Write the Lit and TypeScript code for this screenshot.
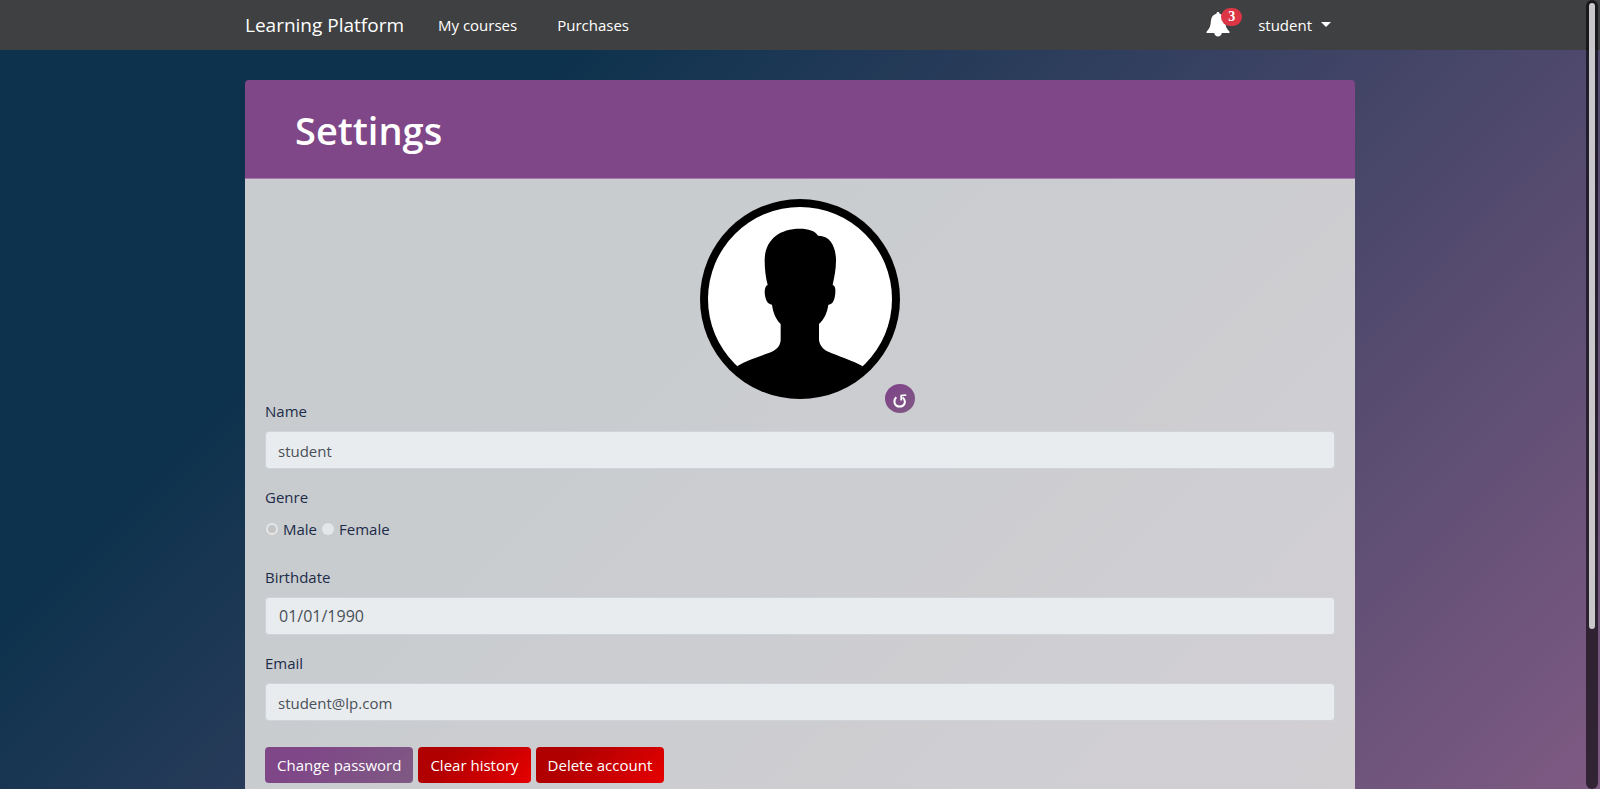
import { LitElement, html, css } from "lit";
import { customElement, property, state } from "lit/decorators.js";

@customElement("site-nav")
export class SiteNav extends LitElement {
  @property() user = "";
  @property({ type: Number }) notifications = 0;

  static styles = css`
    :host {
      display: block;
      background: #3f4041;
      color: #fff;
    }
    .inner {
      box-sizing: border-box;
      max-width: 1140px;
      height: 50px;
      margin: 0 auto;
      padding: 0 15px;
      display: flex;
      align-items: center;
      justify-content: space-between;
    }
    .group {
      display: flex;
      align-items: center;
    }
    a {
      color: inherit;
      text-decoration: none;
    }
    .brand {
      font-size: 19px;
      line-height: 30px;
      margin-right: 34px;
    }
    .links {
      display: flex;
      gap: 40px;
    }
    .account {
      gap: 16px;
      padding-right: 24px;
    }
    .bell {
      position: relative;
      width: 36px;
      height: 34px;
      padding: 0;
      border: 0;
      background: none;
      color: inherit;
    }
    .bell svg {
      position: absolute;
      left: 0;
      top: 4px;
    }
    .badge {
      position: absolute;
      left: 15px;
      top: 0;
      width: 21px;
      border-radius: 9px;
      background: #dc3545;
      font: bold 14px/18px "Liberation Serif", serif;
      text-align: center;
    }
    .user {
      display: flex;
      align-items: center;
      gap: 9px;
      padding: 0;
      border: 0;
      background: none;
      color: inherit;
      font: inherit;
    }
    .caret {
      border: 5px solid transparent;
      border-top-color: #fff;
      border-bottom: 0;
      margin-bottom: 2px;
    }
  `;

  render() {
    return html`
      <nav class="inner" aria-label="Main">
        <div class="group">
          <a class="brand" href="#">Learning Platform</a>
          <div class="links">
            <a href="#courses">My courses</a>
            <a href="#purchases">Purchases</a>
          </div>
        </div>
        <div class="group account">
          <button class="bell" type="button" aria-label="Notifications">
            <svg width="24" height="25" viewBox="0 0 24 25" fill="#fff" aria-hidden="true">
              <path d="M12 0c1 0 1.500 .7 1.600 1.700 3.500 .8 5.300 3.400 5.500 7.300 .2 4.800 1.500 8 4.400 10.700v1.300H15.800c-.3 2.200-1.900 3.500-3.800 3.500s-3.500-1.300-3.800-3.500H.5v-1.300c2.900-2.700 4.200-5.900 4.400-10.700C5.100 5.100 6.900 2.500 10.400 1.700 10.500 .7 11 0 12 0z"/>
            </svg>
            <span class="badge">${this.notifications}</span>
          </button>
          <button class="user" type="button" aria-haspopup="menu">
            ${this.user}<span class="caret"></span>
          </button>
        </div>
      </nav>
    `;
  }
}

@customElement("user-avatar")
export class UserAvatar extends LitElement {
  static styles = css`
    :host {
      display: block;
      position: relative;
      width: 200px;
      height: 200px;
    }
    .picture {
      display: block;
      width: 100%;
      height: 100%;
    }
    .reset {
      position: absolute;
      right: -15px;
      bottom: -14px;
      width: 30px;
      height: 29px;
      display: grid;
      place-items: center;
      padding: 4px 0 0;
      border: 0;
      border-radius: 50%;
      background: linear-gradient(135deg, #7f4788 26%, #7f5a83);
    }
  `;

  render() {
    return html`
      <svg class="picture" viewBox="0 0 600 600" role="img" aria-label="Profile picture">
        <circle cx="300" cy="300" r="300" />
        <circle cx="300" cy="300" r="276" fill="#fff" />
        <path
          d="M300 89C325 89 345 95 354 110C390 109 408 142 408 185C408 210 403 235 398 257C405 260 407 270 406 280C405 300 399 318 385 317C382 340 372 362 357 375V423C359 440 370 450 380 456C415 472 460 485 488 502C440 560 370 590 300 590C230 590 160 560 111 502C145 480 190 470 220 456C232 449 241 440 242 423V375C228 362 219 340 216 317C202 317 195 300 194 280C194 268 197 260 203 258C197 235 194 210 194 185C194 125 235 89 300 89Z" />
      </svg>
      <button class="reset" type="button" aria-label="Reset picture">
        <svg width="14" height="15" viewBox="0 0 14 15" fill="none" stroke="#fff" aria-hidden="true">
          <path stroke-width="2" d="M3.300 4.300C0 7.500 1.200 13.500 6.600 13.600 12.200 13.500 13.500 7.500 9.500 4.500" />
          <path stroke-width="1.700" d="M8.200 7.500V2.600L13.300 2" />
        </svg>
      </button>
    `;
  }
}

@customElement("app-root")
export class AppRoot extends LitElement {
  @state() private profile = {
    name: "student",
    birthdate: "01/01/1990",
    email: "student@lp.com",
  };

  static styles = css`
    :host {
      display: block;
      position: relative;
      height: 100vh;
      overflow: hidden;
      background: linear-gradient(315deg, #7f5a83 0%, #0d324d 74%);
      font: 15px/24px "Open Sans", "Noto Sans", sans-serif;
    }
    .scroller {
      height: 100%;
      overflow-y: auto;
      scrollbar-width: none;
    }
    .container {
      box-sizing: border-box;
      max-width: 1140px;
      margin: 0 auto;
      padding: 30px 15px;
    }
    .card-header {
      padding: 26px 50px 24px;
      border-bottom: 1px solid #a87bb0;
      border-radius: 4px 4px 0 0;
      background: #7f4788;
      color: #fff;
    }
    h1 {
      margin: 0;
      font-size: 38px;
      line-height: 48px;
      font-weight: 600;
    }
    .card-body {
      display: flex;
      flex-direction: column;
      gap: 16px;
      padding: 20px 20px 200px;
      background: linear-gradient(135deg, #c8cccf 20%, #cccdd0 50%, #d2cfd3 90%);
      color: #1c2b48;
    }
    .top {
      display: flex;
      flex-direction: column;
    }
    user-avatar {
      align-self: center;
    }
    .field,
    fieldset {
      display: flex;
      flex-direction: column;
      gap: 8px;
      min-width: 0;
      margin: 0;
      padding: 0;
      border: 0;
    }
    fieldset {
      display: block;
      padding-bottom: 8px;
    }
    legend {
      padding: 0;
      margin-bottom: 8px;
    }
    .text {
      box-sizing: border-box;
      width: 100%;
      height: 38px;
      padding: 7px 12px 5px;
      border: 1px solid #ced4da;
      border-radius: 4px;
      background: #e8ecef;
      color: #495057;
      font: inherit;
    }
    .date {
      padding: 6px 13px;
      font-size: 16px;
    }
    .options {
      display: flex;
      align-items: center;
      gap: 4px;
    }
    .option {
      display: flex;
      align-items: center;
      gap: 5px;
    }
    .radio {
      appearance: none;
      box-sizing: border-box;
      width: 12px;
      height: 12px;
      margin: 0 0 0 1px;
      border-radius: 50%;
      background: #e5e6e8;
    }
    .radio:checked {
      border: 2px solid #e5e6e8;
      background: #c4c4c4;
    }
    .actions {
      display: flex;
      gap: 5px;
      padding-top: 10px;
    }
    .btn {
      height: 36px;
      padding: 0 12px;
      border: 0;
      border-radius: 4px;
      color: #fff;
      font: inherit;
      background: linear-gradient(135deg, #7f4788 26%, #7f5a83);
    }
    .danger {
      background: linear-gradient(135deg, #b00000 26%, #e60000);
    }
    .scrollbar {
      position: absolute;
      top: 0;
      right: 2px;
      bottom: 0;
      box-sizing: border-box;
      width: 12px;
      padding: 3px;
      border-radius: 6px;
      background: rgba(0, 0, 0, 0.6);
    }
    .thumb {
      height: 80%;
      border-radius: 3px;
      background: #c9c7ca;
    }
  `;

  render() {
    const { name, birthdate, email } = this.profile;
    return html`
      <div class="scroller">
        <site-nav user=${name} notifications="3"></site-nav>
        <main class="container">
          <header class="card-header"><h1>Settings</h1></header>
          <form class="card-body">
            <div class="top">
              <user-avatar></user-avatar>
              <div class="field">
                <label for="name">Name</label>
                <input class="text" id="name" type="text" readonly .value=${name} />
              </div>
            </div>
            <fieldset>
              <legend>Genre</legend>
              <div class="options">
                <label class="option"><input class="radio" type="radio" name="genre" checked />Male</label>
                <label class="option"><input class="radio" type="radio" name="genre" />Female</label>
              </div>
            </fieldset>
            <div class="field">
              <label for="birthdate">Birthdate</label>
              <input class="text date" id="birthdate" type="text" readonly .value=${birthdate} />
            </div>
            <div class="field">
              <label for="email">Email</label>
              <input class="text" id="email" type="email" readonly .value=${email} />
            </div>
            <div class="actions">
              <button class="btn" type="button">Change password</button>
              <button class="btn danger" type="button">Clear history</button>
              <button class="btn danger" type="button">Delete account</button>
            </div>
          </form>
        </main>
      </div>
      <div class="scrollbar" aria-hidden="true"><div class="thumb"></div></div>
    `;
  }
}
